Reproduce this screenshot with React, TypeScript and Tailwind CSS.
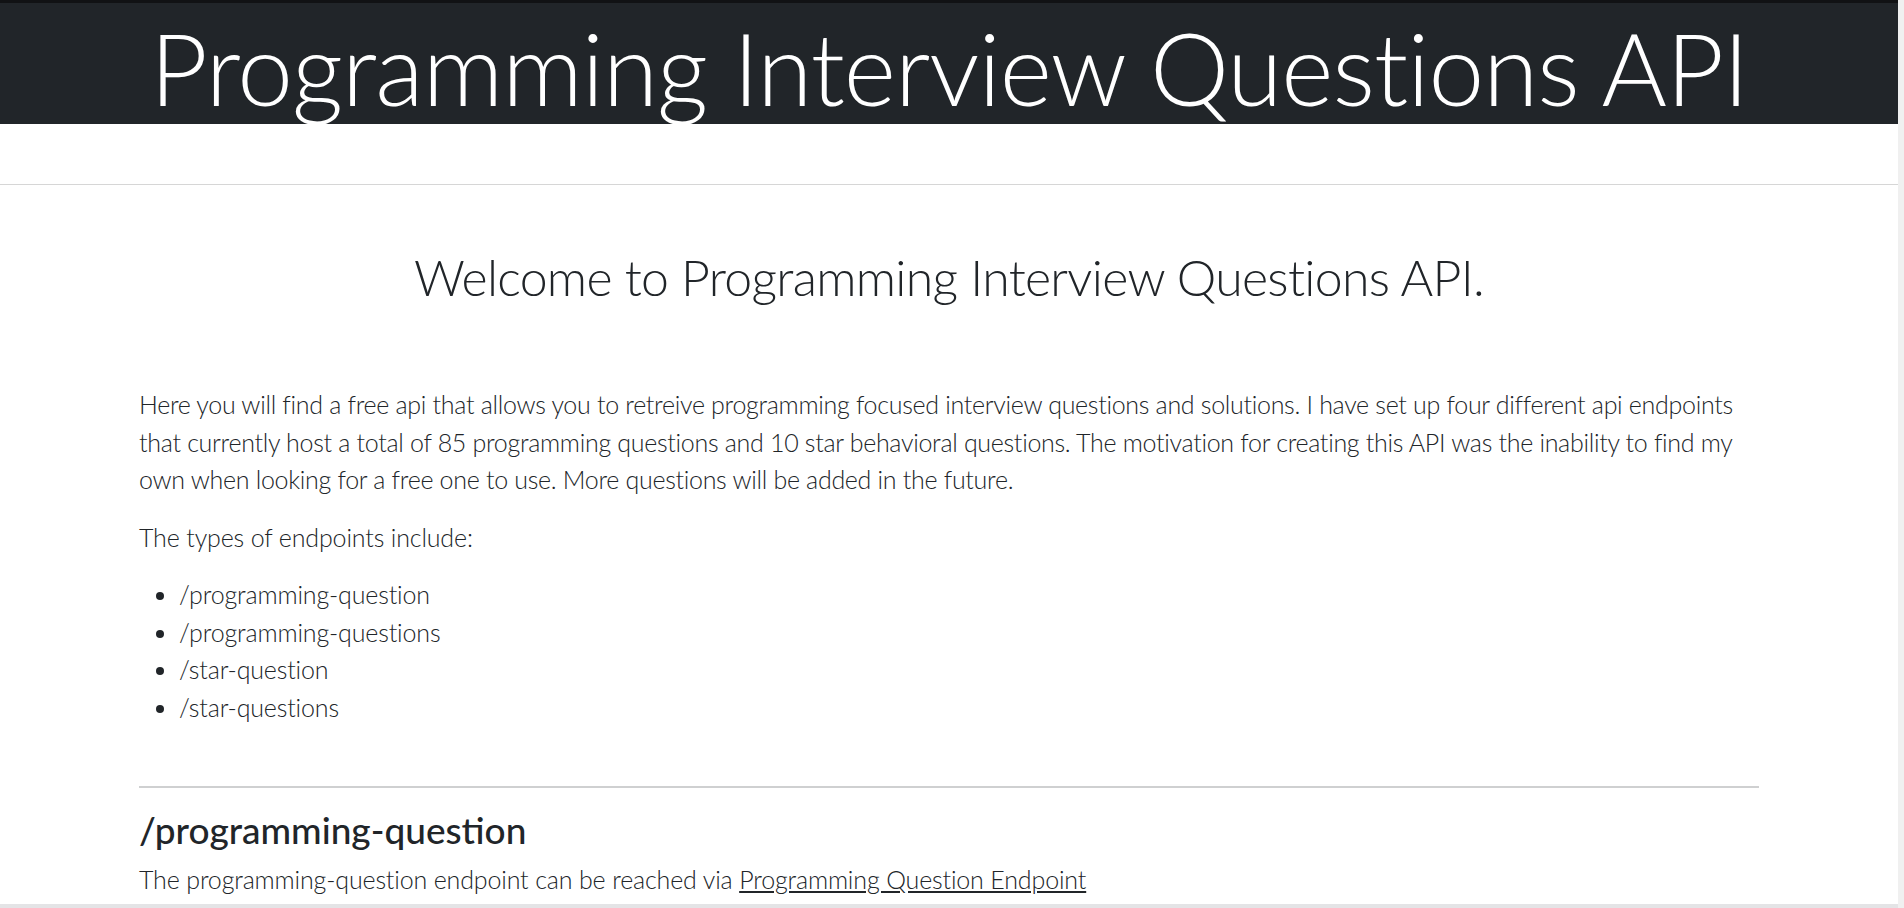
import React from "react";

const endpoints: string[] = [
  "/programming-question",
  "/programming-questions",
  "/star-question",
  "/star-questions",
];

const App: React.FC = () => {
  return (
    <div className="flex h-[908px] w-full overflow-hidden bg-white font-['Lato','Liberation_Sans',sans-serif] text-[#212529]">
      <div className="relative min-w-0 flex-1">
        <header className="h-[124px] border-t-[3px] border-[#111214] bg-[#212529]">
          <h1 className="pt-[4px] text-center text-[100px] font-light leading-[1.2] tracking-[-1px] text-white">
            Programming Interview Questions API
          </h1>
        </header>
        <div className="h-[61px] border-b border-[#d6d6d6]" />

        <main className="mx-auto w-[1650px] px-[15px]">
          <h2 className="mt-[62px] text-center text-[50px] font-light leading-[1.2] tracking-[-0.7px]">
            Welcome to Programming Interview Questions API.
          </h2>

          <p className="mt-[79px] mb-[20px] text-[25px] font-light leading-[37.5px] tracking-[-0.3px]">
            Here you will find a free api that allows you to retreive
            programming focused interview questions and solutions. I have set
            up four different api endpoints that currently host a total of 85
            programming questions and 10 star behavioral questions. The
            motivation for creating this API was the inability to find my own
            when looking for a free one to use. More questions will be added in
            the future.
          </p>
          <p className="mb-[20px] text-[25px] font-light leading-[37.5px] tracking-[-0.15px]">
            The types of endpoints include:
          </p>
          <ul className="list-disc pl-[40px] text-[25px] font-light leading-[37.5px] tracking-[-0.15px]">
            {endpoints.map((ep) => (
              <li key={ep}>{ep}</li>
            ))}
          </ul>

          <hr className="mt-[60px] border-0 border-t-2 border-[#cfd0d1]" />

          <h3 className="mt-[21px] mb-[10px] text-[37px] font-medium leading-[42px]">
            /programming-question
          </h3>
          <p className="text-[25px] font-light leading-[37.5px] tracking-[-0.15px]">
            The programming-question endpoint can be reached via{" "}
            <a href="#" className="underline">
              Programming Question Endpoint
            </a>
          </p>
        </main>

        {/* window edge at the bottom */}
        <div className="fixed bottom-0 left-0 right-[6px] h-[4px] bg-[#e4e4e6]" />
      </div>
      <div className="w-[6px] bg-[#f0f0f0]" />
    </div>
  );
};

export default App;
